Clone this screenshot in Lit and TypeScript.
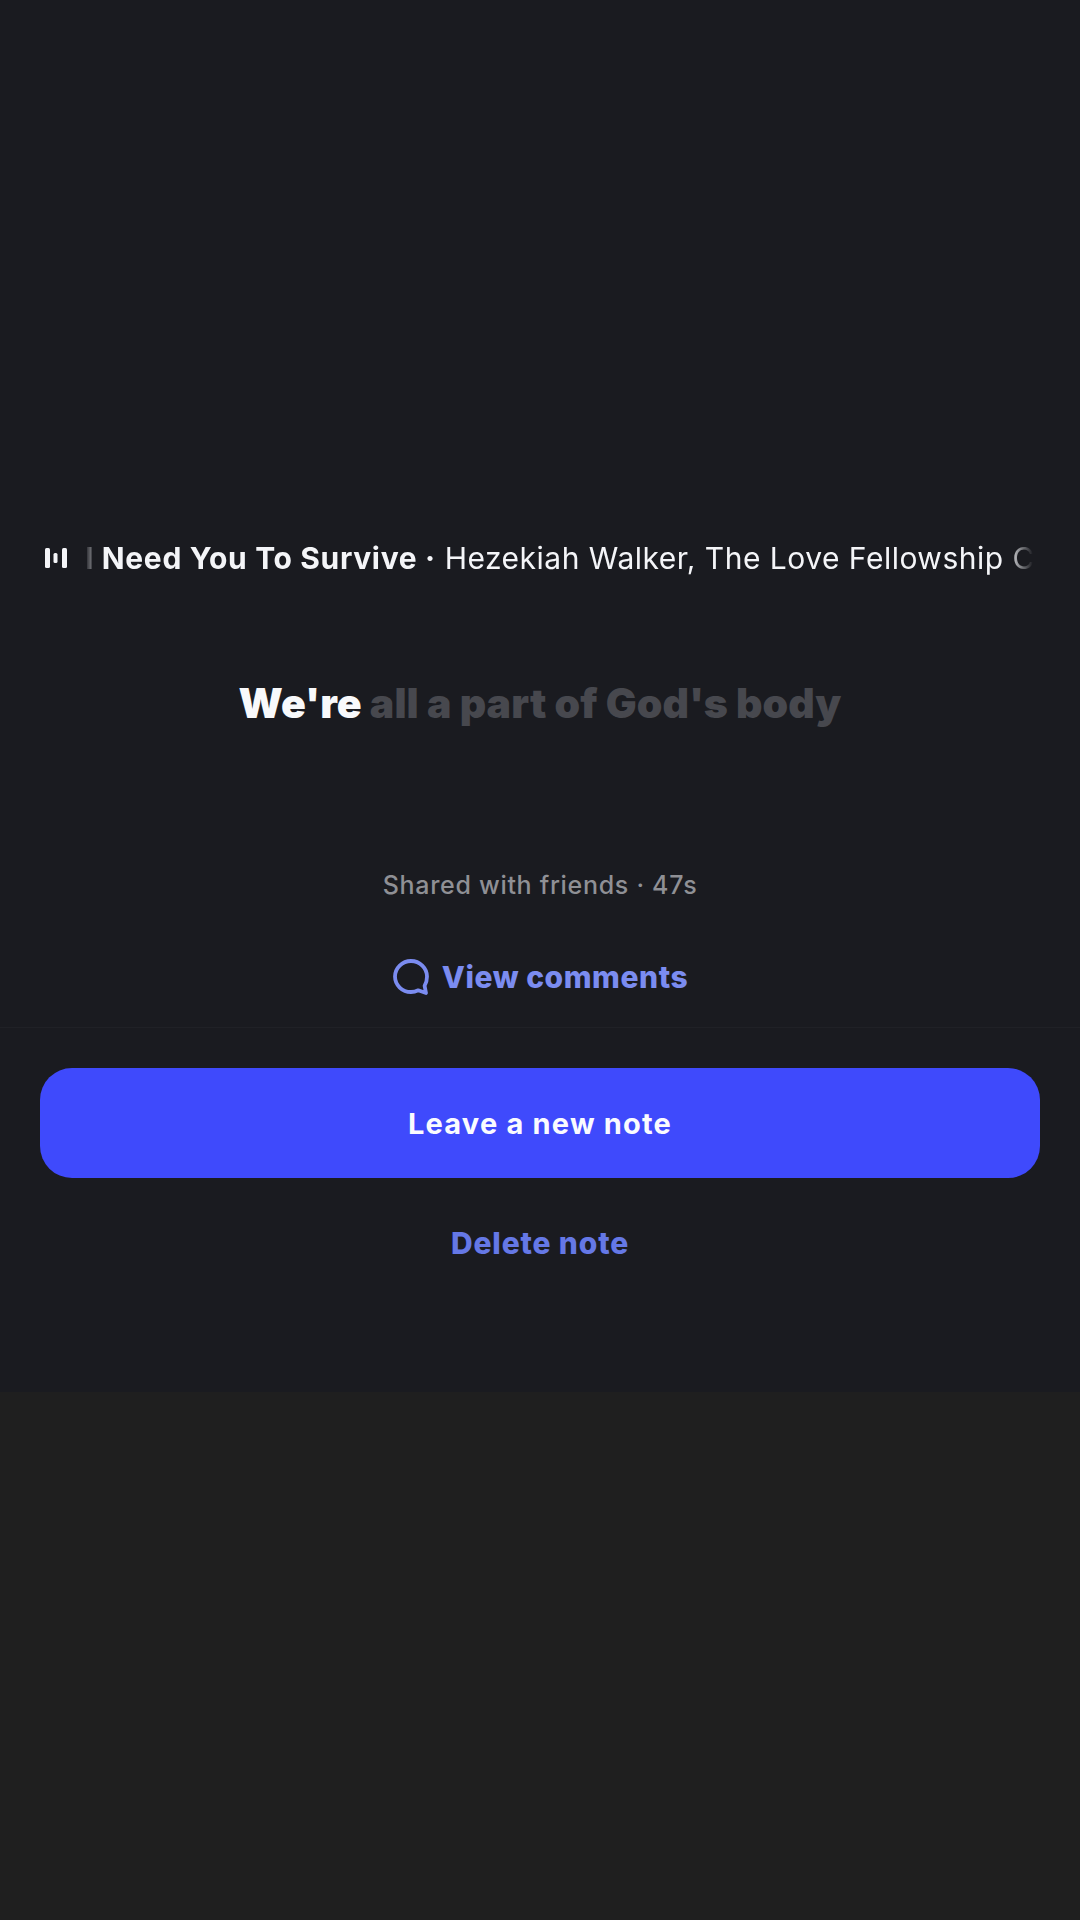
import { LitElement, html, css } from "lit";
import { customElement } from "lit/decorators.js";

@customElement("app-root")
export class AppRoot extends LitElement {
  static styles = css`
    :host {
      display: block;
      width: 1080px;
      height: 1920px;
      background: #1f1f1f;
      font-family: Inter, "Noto Sans", sans-serif;
      overflow: hidden;
    }
    .sheet {
      height: 1392px;
      box-sizing: border-box;
      padding-top: 538px;
      background: #1a1b20;
      display: flex;
      flex-direction: column;
      align-items: center;
    }
    .track {
      align-self: stretch;
      height: 40px;
      padding-left: 45px;
      display: flex;
      align-items: center;
      gap: 18px;
      color: #f4f5f8;
    }
    .bars {
      width: 22px;
      height: 22px;
      flex: none;
    }
    .marquee {
      width: 955px;
      overflow: hidden;
      white-space: nowrap;
      font-size: 30px;
      line-height: 40px;
      letter-spacing: 0.5px;
      -webkit-mask-image: linear-gradient(90deg, transparent 0, #000 16px, #000 922px, transparent 948px);
      mask-image: linear-gradient(90deg, transparent 0, #000 16px, #000 922px, transparent 948px);
    }
    .title {
      font-weight: 700;
      letter-spacing: 0.65px;
    }
    .lyric {
      margin-top: 100px;
      height: 50px;
      font-size: 41px;
      line-height: 50px;
      font-weight: 900;
      letter-spacing: 0.05px;
      color: #47484e;
      white-space: nowrap;
    }
    .lyric b {
      font-weight: 900;
      color: #f8f9fb;
    }
    .shared {
      margin-top: 139px;
      height: 36px;
      font-size: 25px;
      line-height: 36px;
      font-weight: 500;
      letter-spacing: 0.7px;
      color: #8f9095;
    }
    .comments {
      margin-top: 54px;
      display: flex;
      align-items: center;
      gap: 12px;
      height: 40px;
      font-size: 30px;
      line-height: 40px;
      font-weight: 800;
      letter-spacing: 0.55px;
      color: #7b8cf0;
    }
    .comments svg {
      width: 38px;
      height: 38px;
      flex: none;
    }
    .rule {
      align-self: stretch;
      height: 1px;
      margin-top: 30px;
      background: #202126;
    }
    .primary {
      margin-top: 40px;
      width: 1000px;
      height: 110px;
      border-radius: 32px;
      background: #3f4afc;
      color: #fafbff;
      display: flex;
      align-items: center;
      justify-content: center;
      font-size: 29px;
      font-weight: 700;
      letter-spacing: 1.2px;
    }
    .delete {
      margin-top: 45px;
      height: 40px;
      line-height: 40px;
      font-size: 30px;
      font-weight: 800;
      letter-spacing: 0.85px;
      color: #6578e6;
    }
  `;

  render() {
    return html`
      <div class="sheet">
        <div class="track">
          <svg class="bars" viewBox="0 0 22 22" fill="currentColor">
            <rect x="0" y="1" width="5" height="20" rx="1.5"></rect>
            <rect x="8.5" y="6" width="4" height="10" rx="1.5"></rect>
            <rect x="17" y="1" width="5" height="20" rx="1.5"></rect>
          </svg>
          <div class="marquee">
            <span class="title">I Need You To Survive ·</span> Hezekiah Walker, The Love Fellowship C
          </div>
        </div>
        <div class="lyric"><b>We're</b> all a part of God's body</div>
        <div class="shared">Shared with friends · 47s</div>
        <div class="comments">
          <svg viewBox="0 0 38 38" fill="none" stroke="currentColor" stroke-width="3.8" stroke-linejoin="round">
            <path d="M19 3C10.2 3 3 10 3 18.6S10.2 34 19 34c2.6 0 5-.6 7.2-1.7L34 35l-1.4-7.2c1.6-2.5 2.4-5.9 2.4-9.2C35 10 27.8 3 19 3Z"></path>
          </svg>
          <span>View comments</span>
        </div>
        <div class="rule"></div>
        <div class="primary">Leave a new note</div>
        <div class="delete">Delete note</div>
      </div>
    `;
  }
}
